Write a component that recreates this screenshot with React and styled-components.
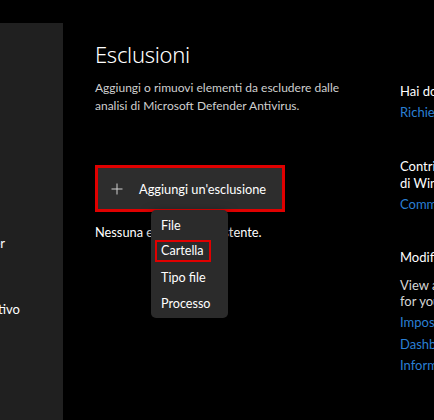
import React from 'react';
import styled, { createGlobalStyle } from 'styled-components';

const GlobalStyle = createGlobalStyle`
  html, body {
    margin: 0;
    padding: 0;
    background: #000;
    overflow: hidden;
  }
  body {
    font-family: Lato, "Noto Sans", sans-serif;
    color: #fff;
  }
`;

const Window = styled.div`
  width: 434px;
  height: 420px;
  display: flex;
  flex-direction: column;
  background: #000;
  overflow: hidden;
`;

const TitleBar = styled.div`
  height: 23px;
  flex-shrink: 0;
`;

const Body = styled.div`
  flex: 1;
  display: flex;
  flex-direction: row;
  min-height: 0;
`;

const Sidebar = styled.nav`
  width: 63px;
  flex-shrink: 0;
  background: #202020;
  overflow: hidden;
  display: flex;
  flex-direction: column;
  padding-top: 203px;
  box-sizing: border-box;
`;

const NavItem = styled.div`
  height: 33px;
  display: flex;
  align-items: center;
  justify-content: flex-end;
  white-space: nowrap;
  padding-right: ${props => props.end}px;
  font-size: 13px;
  color: #fff;
`;

const Content = styled.main`
  flex: 1;
  display: flex;
  flex-direction: row;
  padding: 16px 0 0 32px;
  min-width: 0;
`;

const MainColumn = styled.section`
  width: 305px;
  flex-shrink: 0;
  display: flex;
  flex-direction: column;
`;

const Title = styled.h1`
  margin: 0;
  font-family: "Noto Sans", sans-serif;
  font-size: 22px;
  font-weight: 300;
  line-height: 30px;
  letter-spacing: -0.3px;
`;

const Description = styled.p`
  margin: 10px 0 0;
  width: 270px;
  font-size: 12px;
  line-height: 18px;
  color: #cfcfcf;
`;

const ButtonArea = styled.div`
  position: relative;
  align-self: flex-start;
  margin-top: 50px;
  border: 3px solid #e00000;
`;

const AddButton = styled.button`
  display: flex;
  align-items: center;
  gap: 16px;
  width: 184px;
  height: 41px;
  padding: 0 0 0 13px;
  border: none;
  background: #2d2d2d;
  color: #fff;
  font-family: inherit;
  font-size: 12.8px;
  cursor: pointer;
`;

const PlusIcon = () => (
  <svg width="12" height="12" viewBox="0 0 12 12" fill="none">
    <path d="M6 0.5V11.5M0.5 6H11.5" stroke="#d0d0d0" strokeWidth="1" />
  </svg>
);

const Menu = styled.ul`
  position: absolute;
  left: 53px;
  top: calc(100% + 1px);
  width: 77px;
  margin: 0;
  padding: 2px 0;
  list-style: none;
  background: #2b2b2b;
  border-radius: 5px;
  box-shadow: 0 4px 12px rgba(0, 0, 0, 0.6);
  z-index: 2;
`;

const MenuItem = styled.li`
  height: 26px;
  display: flex;
  align-items: center;
  padding-left: ${props => (props.highlighted ? 4 : 10)}px;
  font-size: 12.6px;
  color: #fff;
`;

const Highlight = styled.span`
  border: 2px solid #e00000;
  padding: 0 5px 1px 4px;
  line-height: 17px;
`;

const EmptyText = styled.p`
  margin: 11px 0 0;
  font-size: 12.8px;
  line-height: 18px;
  color: #fff;
`;

const SideColumn = styled.aside`
  width: 240px;
  flex-shrink: 0;
  padding-top: 44px;
  display: flex;
  flex-direction: column;
  gap: 34px;
`;

const InfoBlock = styled.div`
  display: flex;
  flex-direction: column;
`;

const InfoTitle = styled.div`
  font-size: 13px;
  line-height: 17px;
  color: #fff;
  white-space: nowrap;
  margin-bottom: ${props => props.gap}px;
`;

const InfoText = styled.div`
  font-size: 13px;
  line-height: 16px;
  color: #d6d6d6;
  margin-bottom: 3px;
  white-space: nowrap;
`;

const Link = styled.a`
  font-size: 13px;
  line-height: 21.5px;
  color: #2a7fd4;
  text-decoration: none;
  white-space: nowrap;
`;

const menuItems = ['File', 'Cartella', 'Tipo file', 'Processo'];

export default function App() {
  return (
    <Window>
      <GlobalStyle />
      <TitleBar />
      <Body>
        <Sidebar>
          <NavItem end={58}>Controllo delle app e del browser</NavItem>
          <NavItem end={70}>Sicurezza dispositivo</NavItem>
          <NavItem end={43}>Prestazioni e integrità del dispositivo</NavItem>
        </Sidebar>
        <Content>
          <MainColumn>
            <Title>Esclusioni</Title>
            <Description>
              Aggiungi o rimuovi elementi da escludere dalle analisi di
              Microsoft Defender Antivirus.
            </Description>
            <ButtonArea>
              <AddButton>
                <PlusIcon />
                Aggiungi un'esclusione
              </AddButton>
              <Menu>
                {menuItems.map(item => (
                  <MenuItem key={item} highlighted={item === 'Cartella'}>
                    {item === 'Cartella' ? <Highlight>{item}</Highlight> : item}
                  </MenuItem>
                ))}
              </Menu>
            </ButtonArea>
            <EmptyText>Nessuna esclusione esistente.</EmptyText>
          </MainColumn>
          <SideColumn>
            <InfoBlock>
              <InfoTitle gap={2}>Hai domande?</InfoTitle>
              <Link href="#">Richiedi assistenza</Link>
            </InfoBlock>
            <InfoBlock>
              <InfoTitle gap={2}>
                Contribuisci a migliorare Sicurezza
                <br />
                di Windows
              </InfoTitle>
              <Link href="#">Commenti e suggerimenti</Link>
            </InfoBlock>
            <InfoBlock>
              <InfoTitle gap={11}>Modifica le impostazioni della privacy</InfoTitle>
              <InfoText>
                View and change privacy settings
                <br />
                for your Windows 10 device.
              </InfoText>
              <Link href="#">Impostazioni privacy</Link>
              <Link href="#">Dashboard privacy</Link>
              <Link href="#">Informativa sulla privacy</Link>
            </InfoBlock>
          </SideColumn>
        </Content>
      </Body>
    </Window>
  );
}
